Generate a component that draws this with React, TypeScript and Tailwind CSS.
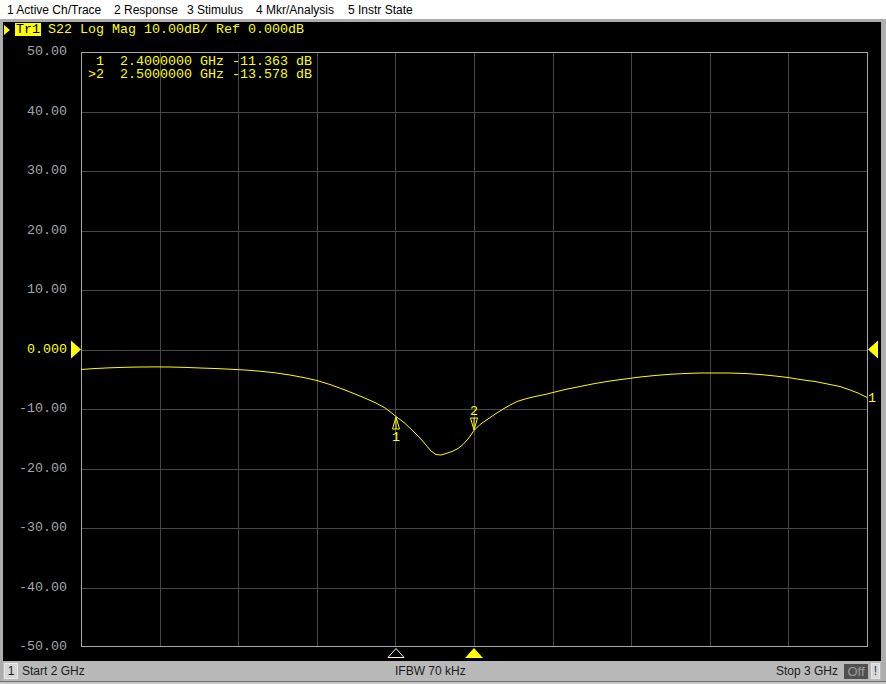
import React from "react";

const labels = ["50.00", "40.00", "30.00", "20.00", "10.00", "0.000", "-10.00", "-20.00", "-30.00", "-40.00", "-50.00"];

const trace =
  "81,369.5 95,368.5 110,367.8 125,367.3 140,367 155,366.9 170,367 185,367.4 200,368 215,368.5 230,369.2 245,370 260,371.2 275,372.8 290,375 305,377.8 317,380.5 330,384.5 345,390 360,396 375,402.5 386,408.5 396,416.5 404,422.5 412,430 420,438 426,445 431,451 436,454.5 441,455 446,453.5 452,451.5 458,448.5 463,444.5 468,439 474,430.5 480,424.5 488,419 496,413.5 504,408.5 511,404.5 517,401.5 525,399 535,396.5 545,394.5 553,392.5 565,389.5 580,386.5 595,383.5 610,381 625,379 640,377 655,375.5 670,374.3 685,373.5 700,373 715,373 730,373 745,373.5 760,374.5 775,376 788,377.5 800,379.5 815,381.5 830,384.5 840,386.5 850,390 858,393 867,397.5";

export default function App() {
  const vx = Array.from({ length: 9 }, (_, i) => Math.round(81 + (i + 1) * 78.6) + 0.5);
  const hy = Array.from({ length: 9 }, (_, j) => Math.round(52 + (j + 1) * 59.5) + 0.5);
  return (
    <div className="w-[886px] h-[684px] bg-[#f0f0f0] flex flex-col overflow-hidden font-['Liberation_Sans',Arial,sans-serif]">
      {/* menu bar */}
      <div className="h-[19px] bg-white flex items-center text-[12px] text-black leading-none">
        <div className="w-[114px] pl-[7px]">1 Active Ch/Trace</div>
        <div className="w-[73px]">2 Response</div>
        <div className="w-[69px]">3 Stimulus</div>
        <div className="w-[92px]">4 Mkr/Analysis</div>
        <div>5 Instr State</div>
      </div>

      {/* frame */}
      <div className="flex-1 flex flex-col border-t-[3px] border-l-[3px] border-r-[5px] border-[#adadad]">
        <div className="h-[639px] bg-black flex flex-col font-['Liberation_Mono',monospace] text-[13.33px]">
          {/* header */}
          <div className="h-[30px] flex items-start pt-[1px] text-[#ffff00] leading-[13px]">
            <svg width="6" height="10" className="ml-[1px] mt-[2px]">
              <polygon points="0,0 6,5 0,10" fill="#ffff00" />
            </svg>
            <span className="ml-[5px] bg-[#ffff00] text-black px-[1px] h-[13px]">Tr1</span>
            <span className="whitespace-pre -ml-[1px]"> S22 Log Mag 10.00dB/ Ref 0.000dB</span>
          </div>

          {/* plot row */}
          <div className="h-[609px] flex">
            <div className="w-[78px] h-[609px]">
              <div className="-mt-[7px] h-[609px] flex flex-col justify-between">
                {labels.map((l) => (
                  <div
                    key={l}
                    className={`h-[14px] leading-[14px] text-right pr-[14px] ${l === "0.000" ? "text-[#ffff00]" : "text-[#a3a7ab]"}`}
                  >
                    {l}
                  </div>
                ))}
              </div>
            </div>
            <div className="relative w-[787px] h-[609px]">
              <svg width="787" height="609" viewBox="81 52 787 609" className="overflow-visible block" shapeRendering="crispEdges">
                {vx.map((x) => (
                  <line key={"v" + x} x1={x} y1={52} x2={x} y2={647} stroke="#474747" strokeWidth="1" />
                ))}
                {hy.map((y) => (
                  <line key={"h" + y} x1={81} y1={y} x2={867} y2={y} stroke="#474747" strokeWidth="1" />
                ))}
                <rect x="81.5" y="52.5" width="786" height="594" fill="none" stroke="#a8a8a8" strokeWidth="1" />
                <g shapeRendering="auto">
                  <polyline points={trace} fill="none" stroke="#ffff00" strokeWidth="1" />
                  {/* marker 1 */}
                  <polygon points="396,417 392.5,429 399.5,429" fill="none" stroke="#ffff00" strokeWidth="1" />
                  <line x1="396" y1="419" x2="396" y2="429" stroke="#ffff00" strokeWidth="1" />
                  <text x="396" y="441" textAnchor="middle" fill="#ffff00" fontFamily="Liberation Mono, monospace" fontSize="13.33">1</text>
                  {/* marker 2 */}
                  <polygon points="474,430 470.5,418 477.5,418" fill="none" stroke="#ffff00" strokeWidth="1" />
                  <line x1="474" y1="418" x2="474" y2="428" stroke="#ffff00" strokeWidth="1" />
                  <text x="474" y="415" textAnchor="middle" fill="#ffff00" fontFamily="Liberation Mono, monospace" fontSize="13.33">2</text>
                  {/* channel label */}
                  <text x="868" y="402" fill="#ffff00" fontFamily="Liberation Mono, monospace" fontSize="13.33">1</text>
                  {/* reference triangles */}
                  <polygon points="71,340.5 81,349.5 71,358.5" fill="#ffff00" />
                  <polygon points="878,340.5 868,349.5 878,358.5" fill="#ffff00" />
                  {/* bottom stimulus markers */}
                  <polygon points="396,648.5 388,657.5 404,657.5" fill="none" stroke="#fbfbd0" strokeWidth="1" />
                  <polygon points="474,648 465,658 483,658" fill="#ffff00" />
                </g>
              </svg>
              <div className="absolute left-[7px] top-[4px] text-[#ffff00] leading-[12.5px] whitespace-pre">
                <div> 1  2.4000000 GHz -11.363 dB</div>
                <div>&gt;2  2.5000000 GHz -13.578 dB</div>
              </div>
            </div>
          </div>
        </div>

        {/* status bar */}
        <div className="h-[20px] bg-[#b9b9b9] flex items-center text-[12px] text-[#1a1a1a] leading-none">
          <div className="ml-[1px] w-[14px] h-[16px] bg-[#d6d6d6] border border-[#e8e8e8] flex items-center justify-center">1</div>
          <div className="ml-[4px] w-[373px]">Start 2 GHz</div>
          <div>IFBW 70 kHz</div>
          <div className="flex-1" />
          <div>Stop 3 GHz</div>
          <div className="ml-[6px] w-[24px] h-[15px] bg-[#505050] text-[#9c9c9c] flex items-center justify-center text-[13px]">Off</div>
          <div className="ml-[3px] w-[9px] h-[16px] bg-[#d8d8d8] border border-[#e6e6e6] text-[#1c2c8c] flex items-center justify-center">!</div>
          <div className="w-[1px]" />
        </div>
      </div>
      <div className="h-[1px] bg-[#6e6e6e]" />
      <div className="h-[2px] bg-[#c8c8c8]" />
    </div>
  );
}
